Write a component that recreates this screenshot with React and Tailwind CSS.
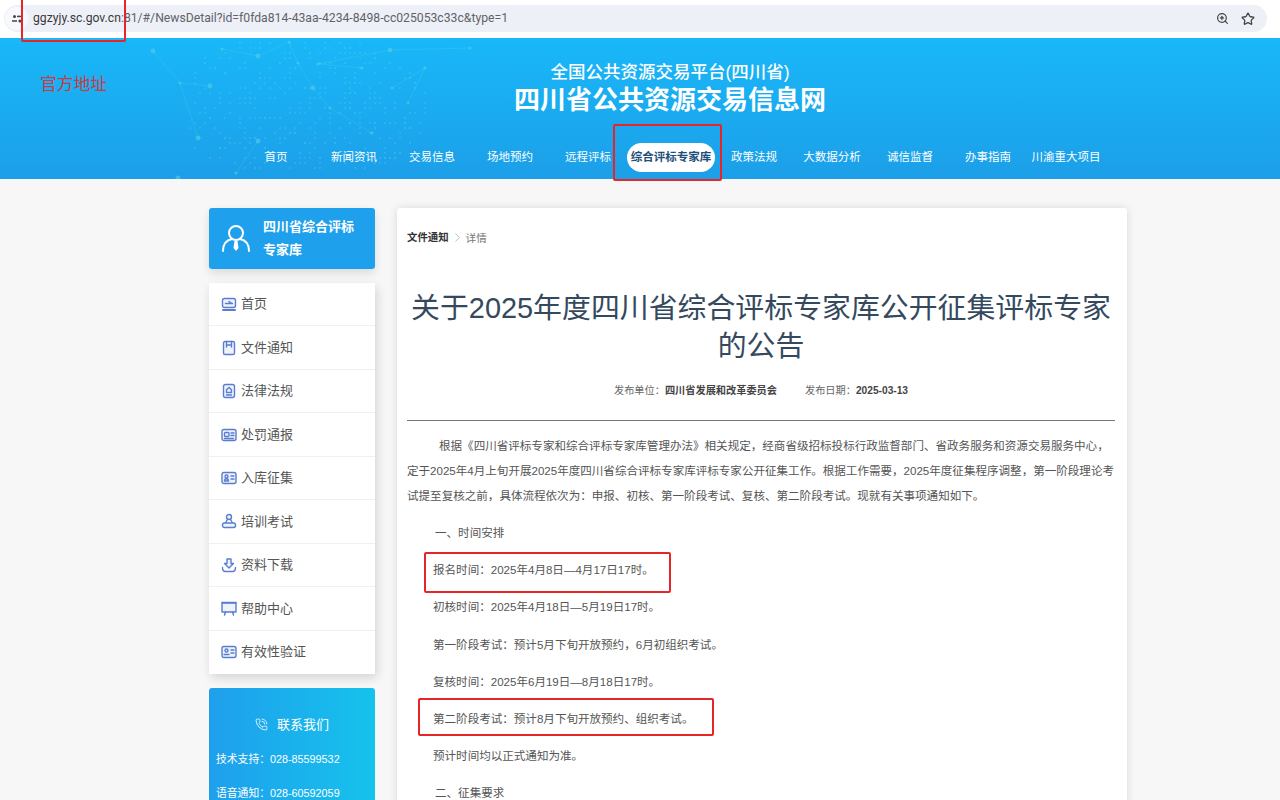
import React from "react";
import { ZoomIn, Star, PhoneCall, ChevronRight } from "lucide-react";

const navItems = ["首页","新闻资讯","交易信息","场地预约","远程评标","综合评标专家库","政策法规","大数据分析","诚信监督","办事指南","川渝重大项目"];

const Ic = ({ children }) => (
  <svg viewBox="0 0 16 16" className="w-[16px] h-[16px] shrink-0" fill="#eef2fb" stroke="#5a7dd0" strokeWidth="1.4" strokeLinejoin="round" strokeLinecap="round">{children}</svg>
);

const sideItems = [
  ["首页", <Ic><rect x="1.5" y="2.5" width="13" height="9" rx="2"/><path d="M4.5 7.5h7M8 5.500l3 2"/><path d="M2 14h12" strokeWidth="2"/></Ic>],
  ["文件通知", <Ic><rect x="2.5" y="1.5" width="11" height="13" rx="1.5"/><path d="M5.500 1.500v5.500M10.500 1.500v5.500M5.500 5h5"/></Ic>],
  ["法律法规", <Ic><rect x="2.5" y="1.5" width="11" height="13" rx="2"/><path d="M8 4.500l2.500 2.200v2.800h-5V6.700zM5.500 12h5"/></Ic>],
  ["处罚通报", <Ic><rect x="1" y="2.500" width="14" height="11" rx="2"/><rect x="3.500" y="5.500" width="4.500" height="4" rx="1"/><path d="M10 6h3M10 8.500h3M3.500 11.500h9"/></Ic>],
  ["入库征集", <Ic><rect x="1" y="2.500" width="14" height="11" rx="2"/><circle cx="5.500" cy="6.500" r="1.500"/><path d="M3.500 11c0-3 4-3 4 0zM10 6h3M10 9h3"/></Ic>],
  ["培训考试", <Ic><circle cx="8" cy="4" r="2.500"/><path d="M6.500 6.500L4.500 10M9.500 6.500l2 3.500"/><rect x="1.500" y="10" width="13" height="4.500" rx="2"/></Ic>],
  ["资料下载", <Ic><path d="M6 2h4v4.500h2.500L8 11 3.500 6.500H6z"/><path d="M1.500 10.500c0 2.500 1 4 3 4h7c2 0 3-1.500 3-4" fill="none"/></Ic>],
  ["帮助中心", <Ic><rect x="1" y="3" width="14" height="9" /><path d="M1 2.500h14M4.500 12l-1 3M11.500 12l1 3" strokeWidth="1.500"/></Ic>],
  ["有效性验证", <Ic><rect x="1" y="2.500" width="14" height="11" rx="2"/><circle cx="5.500" cy="6.500" r="1.500"/><path d="M3 10.500h5M10 6h3M10 9h3"/></Ic>],
];

function rnd(seed) {
  let s = seed;
  return () => ((s = (s * 16807) % 2147483647) - 1) / 2147483646;
}
const r = rnd(4217);
const dots = Array.from({ length: 420 }, () => {
  const x = Math.round((190 + r() * 240) / 5) * 5;
  const y = Math.round((2 + r() * 128) / 5) * 5;
  return [x, y];
}).filter(([x, y]) => Math.hypot((x - 300) / 130, (y - 70) / 75) < 1);
const nodes = [[153,13],[180,45],[222,11],[258,18],[289,4],[298,25],[313,50],[330,70],[372,95],[258,103],[236,135],[322,157],[198,100],[425,30],[408,65],[390,12],[318,26],[362,30],[178,140],[392,50],[470,10],[210,48]];
const links = [[0,1],[2,3],[3,4],[4,5],[5,6],[6,7],[7,8],[9,10],[13,14],[15,16],[16,17],[1,12],[13,19],[20,15],[21,1]];

function HeaderMap() {
  return (
    <svg className="absolute inset-0 w-full h-full pointer-events-none" viewBox="0 0 1280 141" preserveAspectRatio="none">
      <g fill="#5fd6ee" opacity="0.35">
        {dots.map(([x, y], i) => <circle key={i} cx={x} cy={y} r="0.9" />)}
      </g>
      <g stroke="#69d8ea" strokeWidth="0.6" opacity="0.35">
        {links.map(([a, b], i) => <line key={i} x1={nodes[a][0]} y1={nodes[a][1]} x2={nodes[b][0]} y2={nodes[b][1]} />)}
      </g>
      <g fill="#59d2e4" opacity="0.55">
        {nodes.map(([x, y], i) => <circle key={i} cx={x} cy={y} r={i % 3 === 0 ? 2.4 : 1.6} />)}
      </g>
    </svg>
  );
}

const Box = ({ className }) => <div className={"absolute border-[2.5px] border-[#e62528] rounded-[2px] pointer-events-none " + className} />;

const para = ["报名时间\uFF1A2025年4月8日—4月17日17时。","初核时间\uFF1A2025年4月18日—5月19日17时。","第一阶段考试\uFF1A预计5月下旬开放预约\uFF0C6月初组织考试。","复核时间\uFF1A2025年6月19日—8月18日17时。","第二阶段考试\uFF1A预计8月下旬开放预约、组织考试。","预计时间均以正式通知为准。"];

export default function App() {
  return (
    <div className="relative w-[1280px] h-[800px] overflow-hidden bg-[#f7f7f7] text-[#333]" style={{ fontFamily: '"Liberation Sans","Noto Sans CJK SC",sans-serif' }}>
      <div className="h-[38px] bg-white flex items-center pl-[4px] pr-[13px] pb-[1px]">
        <div className="flex-1 h-[27px] rounded-full bg-[#eef0f7] flex items-center">
          <div className="w-[23px] h-[23px] ml-[1px] rounded-full bg-[#f8f9fd] flex items-center justify-center">
            <svg viewBox="0 0 12 12" className="w-[10px] h-[10px]" fill="#444"><circle cx="3" cy="3" r="1.800"/><rect x="6" y="2" width="6" height="1.800"/><rect x="0" y="7.500" width="6" height="1.800"/><circle cx="9.500" cy="8.500" r="1.800"/></svg>
          </div>
          <span className="ml-[5px] text-[12.2px] text-[#3a3a3a]" style={{ fontFamily: 'Roboto,sans-serif' }}>ggzyjy.sc.gov.cn<span className="text-[#5f6368]">:81/#/NewsDetail?id=f0fda814-43aa-4234-8498-cc025053c33c&amp;type=1</span></span>
          <div className="ml-auto flex items-center gap-[12px] pr-[12px]">
            <ZoomIn className="w-[13px] h-[13px] text-[#444]" strokeWidth={2.200} />
            <Star className="w-[14px] h-[14px] text-[#444]" strokeWidth={2.200} />
          </div>
        </div>
      </div>

      <header className="relative h-[141px] bg-gradient-to-b from-[#19b8f8] to-[#1c9fe8]">
        <HeaderMap />
        <div className="relative flex flex-col items-center ml-[60px] pt-[23px] text-white">
          <div className="text-[17.5px] leading-[22px] font-medium">全国公共资源交易平台(四川省)</div>
          <div className="text-[26px] leading-[32px] font-bold mt-[1px]">四川省公共资源交易信息网</div>
        </div>
        <nav className="absolute left-[237px] top-[105px] flex items-center h-[29px]">
          {navItems.map((n, i) => i === 5 ? (
            <div key={n} className="w-[88px] h-[29px] rounded-full bg-white text-[#1e4f7a] text-[11.5px] font-bold flex items-center justify-center whitespace-nowrap">{n}</div>
          ) : (
            <div key={n} className="w-[78px] text-center text-white text-[11.5px] whitespace-nowrap">{n}</div>
          ))}
        </nav>
        <div className="absolute left-[40px] top-[36px] text-[16.8px] leading-[22px] text-[#c93a45]">官方地址</div>
      </header>

      <main className="flex gap-[22px] pl-[209px] pt-[29px]">
        <aside className="w-[166px] shrink-0">
          <div className="h-[61px] rounded-[3px] bg-[#1ea0ec] shadow-[0_4px_10px_rgba(0,0,0,0.12)] flex items-center text-white pb-[2px]">
            <svg viewBox="0 0 30 30" className="w-[30px] h-[30px] ml-[12px] shrink-0" fill="none" stroke="#fff" strokeWidth="2"><circle cx="15" cy="10" r="7"/><path d="M2 28c0-7 4-11 9-12M28 28c0-7-4-11-9-12" strokeLinecap="round"/><path d="M13.500 18h3l1 7-2.500 3-2.500-3z" fill="#fff" stroke="none"/></svg>
            <div className="ml-[12px] text-[13px] leading-[23px] font-bold w-[95px]">四川省综合评标专家库</div>
          </div>
          <div className="mt-[14px] bg-white shadow-[2px_4px_10px_rgba(0,0,0,0.14)]">
            {sideItems.map(([t, ic], i) => (
              <div key={t} className={"h-[43.44px] flex items-center pl-[12px] gap-[4px] text-[13px] text-[#555] " + (i < 8 ? "border-b border-[#f0f0f0]" : "")}>
                {ic}<span>{t}</span>
              </div>
            ))}
          </div>
          <div className="mt-[14px] h-[140px] rounded-[3px] bg-gradient-to-r from-[#1f9fec] to-[#16c2ec] text-white">
            <div className="pt-[28px] flex items-center justify-center gap-[9px] text-[13px] leading-[18px]">
              <PhoneCall className="w-[13px] h-[13px]" strokeWidth={1.500} />
              <span>联系我们</span>
            </div>
            <div className="pl-[7px] mt-[16px] text-[10.8px] leading-[18px] space-y-[16px]">
              <div className="flex"><span>技术支持{"\uFF1A"}</span><span>028-85599532</span></div>
              <div className="flex"><span>语音通知{"\uFF1A"}</span><span>028-60592059</span></div>
            </div>
          </div>
        </aside>

        <article className="w-[730px] shrink-0 h-[700px] bg-white rounded-[3px] shadow-[0_0_8px_rgba(0,0,0,0.12)] pl-[10px] pr-[12px]">
          <div className="pt-[22px] flex items-center text-[10.4px] leading-[14px]">
            <span className="font-bold text-[#333]">文件通知</span>
            <ChevronRight className="w-[15px] h-[15px] text-[#aaa] mx-[1px]" strokeWidth={1.200} />
            <span className="text-[#777] text-[10.6px]">详情</span>
          </div>
          <h1 className="mt-[44px] text-center text-[28.9px] leading-[38px] font-normal text-[#34495e]">关于2025年度四川省综合评标专家库公开征集评标专家的公告</h1>
          <div className="mt-[19px] flex justify-center text-[10.2px] leading-[14px] text-[#666] gap-[28px]">
            <span>发布单位{"\uFF1A"}<b className="text-[#444]">四川省发展和改革委员会</b></span>
            <span>发布日期{"\uFF1A"}<b className="text-[#444]">2025-03-13</b></span>
          </div>
          <div className="mt-[22px] border-t border-[#777]" />
          <div className="text-[11.55px] leading-[25px] text-[#555] mt-[13px]">
            <p className="pl-[32px] whitespace-nowrap">根据《四川省评标专家和综合评标专家库管理办法》相关规定{"\uFF0C"}经商省级招标投标行政监督部门、省政务服务和资源交易服务中心{"\uFF0C"}</p>
            <p className="whitespace-nowrap">定于2025年4月上旬开展2025年度四川省综合评标专家库评标专家公开征集工作。根据工作需要{"\uFF0C"}2025年度征集程序调整{"\uFF0C"}第一阶段理论考</p>
            <p className="whitespace-nowrap">试提至复核之前{"\uFF0C"}具体流程依次为{"\uFF1A"}申报、初核、第一阶段考试、复核、第二阶段考试。现就有关事项通知如下。</p>
            <p className="pl-[28px] mt-[12px]">一、时间安排</p>
            {para.map(p => <p key={p} className="pl-[26px] mt-[12.2px] whitespace-nowrap">{p}</p>)}
            <p className="pl-[28px] mt-[12.2px]">二、征集要求</p>
          </div>
        </article>
      </main>

      <Box className="left-[21px] -top-[4px] w-[105px] h-[46px]" />
      <Box className="left-[613px] top-[124px] w-[109px] h-[57px]" />
      <Box className="left-[424px] top-[552px] w-[247px] h-[41px]" />
      <Box className="left-[418px] top-[698px] w-[296px] h-[38px]" />
    </div>
  );
}
